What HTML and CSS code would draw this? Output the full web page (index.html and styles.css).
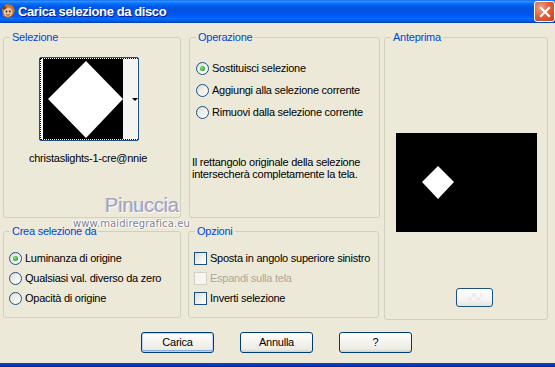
FILE: index.html
```html
<!DOCTYPE html>
<html>
<head>
<meta charset="utf-8">
<link rel="stylesheet" href="styles.css">
</head>
<body>
<div class="window">
  <div class="titlebar">
    <svg class="appicon" width="16" height="18" viewBox="0 0 16 18">
      <path d="M2 6 L6 1 L12 2 L15 7 L13 12 L8 15 L3 13 Z" fill="#c8742c"/>
      <circle cx="8" cy="9" r="4.5" fill="#f2c48e"/>
      <circle cx="6.5" cy="8.5" r="0.9" fill="#2a2a6a"/>
      <circle cx="9.8" cy="8.5" r="0.9" fill="#2a2a6a"/>
      <path d="M6 11.5 Q8 13 10 11.5" stroke="#a03a20" stroke-width="0.9" fill="none"/>
      <path d="M2 5 L5 3 L7 5 L4 7 Z" fill="#7a3e18"/>
      <path d="M11 14 L14 16 L12 17 L9 16 Z" fill="#3a6ad0"/>
    </svg>
    <span class="title">Carica selezione da disco</span>
    <div class="close">
      <svg width="12" height="12" viewBox="0 0 12 12"><path d="M2 2 L10 10 M10 2 L2 10" stroke="#fff" stroke-width="2.2" stroke-linecap="square"/></svg>
    </div>
  </div>
  <div class="content">
    <div class="groups">
      <fieldset class="grp sel">
        <legend>Selezione</legend>
        <div class="sel-inner">
          <div class="thumb">
            <div class="focus">
              <svg class="thumbimg" width="80" height="80" viewBox="0 0 80 80">
                <rect width="80" height="80" fill="#000"/>
                <polygon points="43,2 80,40 43,79 5,40" fill="#fff"/>
              </svg>
              <div class="strip"><span class="arrow"></span></div>
            </div>
          </div>
          <div class="selname">christaslights-1-cre@nnie</div>
        </div>
      </fieldset>
      <fieldset class="grp op">
        <legend>Operazione</legend>
        <div class="rows op-rows">
          <div class="row r22"><span class="radio on"></span><span>Sostituisci selezione</span></div>
          <div class="row r22"><span class="radio"></span><span>Aggiungi alla selezione corrente</span></div>
          <div class="row r22"><span class="radio"></span><span>Rimuovi dalla selezione corrente</span></div>
        </div>
        <p class="desc">Il rettangolo originale della selezione<br>intersecherà completamente la tela.</p>
      </fieldset>
      <fieldset class="grp prev">
        <legend>Anteprima</legend>
        <svg class="preview" width="141" height="99" viewBox="0 0 141 99">
          <rect width="141" height="99" fill="#000"/>
          <polygon points="42,33 58,49 42,66 26,49" fill="#fff"/>
        </svg>
        <div class="pbtn"><span class="checker"></span></div>
      </fieldset>
      <fieldset class="grp crea">
        <legend>Crea selezione da</legend>
        <div class="rows low-rows">
          <div class="row r20"><span class="radio on"></span><span>Luminanza di origine</span></div>
          <div class="row r20"><span class="radio"></span><span>Qualsiasi val. diverso da zero</span></div>
          <div class="row r20"><span class="radio"></span><span>Opacità di origine</span></div>
        </div>
      </fieldset>
      <fieldset class="grp opz">
        <legend>Opzioni</legend>
        <div class="rows low-rows">
          <div class="row r20"><span class="check"></span><span>Sposta in angolo superiore sinistro</span></div>
          <div class="row r20 disabled"><span class="check"></span><span>Espandi sulla tela</span></div>
          <div class="row r20"><span class="check"></span><span>Inverti selezione</span></div>
        </div>
      </fieldset>
    </div>
    <div class="buttons">
      <div class="btn def">Carica</div>
      <div class="btn">Annulla</div>
      <div class="btn">?</div>
    </div>
    <div class="wm1">Pinuccia</div>
    <div class="wm2">www.maidiregrafica.eu</div>
  </div>
  <div class="frame-bottom"></div>
</div>
</body>
</html>
```
FILE: styles.css
```css
html, body {
  margin: 0;
  padding: 0;
  background: #ECE9D8;
}
.window {
  width: 555px;
  height: 367px;
  display: flex;
  flex-direction: column;
  font-family: "Liberation Sans", Arial, sans-serif;
  font-size: 11px;
  letter-spacing: -0.25px;
  color: #000;
  overflow: hidden;
}
.titlebar {
  height: 23px;
  flex: none;
  display: flex;
  align-items: center;
  position: relative;
  background: linear-gradient(to bottom, #0058EE 0%, #3593FF 4%, #288EFF 8%, #127DFF 12%, #036FFC 16%, #0262EE 22%, #0057E5 30%, #0054E3 40%, #0055EB 60%, #005BF5 70%, #026AFE 80%, #0062EF 88%, #0052D6 94%, #0040AB 100%);
}
.appicon {
  margin-left: 0;
  margin-top: 1px;
  flex: none;
}
.title {
  margin-left: 2px;
  margin-top: -1px;
  color: #fff;
  font-family: "Liberation Sans", Arial, sans-serif;
  font-weight: bold;
  font-size: 13px;
  text-shadow: 1px 1px 0 #0A1883;
  letter-spacing: -0.4px;
}
.close {
  position: absolute;
  left: 534px;
  top: 1px;
  width: 19px;
  height: 19px;
  border: 1px solid #fff;
  border-radius: 3px;
  background: radial-gradient(circle at 30% 30%, #F0A08A 0%, #E0623F 45%, #C3401F 100%);
  display: flex;
  align-items: center;
  justify-content: center;
}
.content {
  flex: 1;
  position: relative;
  padding-top: 8px;
  display: flex;
  flex-direction: column;
}
.groups {
  display: grid;
  grid-template-columns: 178px 199px 168px;
  grid-template-rows: 187px 93px;
  column-gap: 0;
  row-gap: 7px;
  margin-left: 3px;
}
.grp {
  margin: 0;
  padding: 0;
  border: 1px solid #D0D0BF;
  border-radius: 3px;
  min-width: 0;
  box-sizing: border-box;
}
.grp legend {
  color: #0046D5;
  padding: 0 2px;
  margin-left: 6px;
  line-height: 13px;
  font-size: 11px;
}
.sel { grid-column: 1; grid-row: 1; }
.op { grid-column: 2; grid-row: 1; margin-left: 8px; }
.prev { grid-column: 3; grid-row: 1 / span 2; margin-left: 4px; margin-bottom: -2px; }
.crea { grid-column: 1; grid-row: 2; }
.opz { grid-column: 2; grid-row: 2; margin-left: 7px; margin-right: 1px; }

.sel-inner {
  display: flex;
  flex-direction: column;
  align-items: center;
  padding-right: 8px;
  padding-top: 13px;
}
.thumb {
  width: 100px;
  height: 84px;
  box-sizing: border-box;
  border: 1px solid #1C4F86;
  border-radius: 2px;
  background: #fff;
  margin-left: 1px;
}
.focus {
  height: 100%;
  box-sizing: border-box;
  border: 1px dotted #000;
  display: flex;
  padding-left: 2px;
}
.thumbimg { display: block; flex: none; }
.strip {
  flex: 1;
  background: #F4F4F2;
  display: flex;
  align-items: center;
  padding-left: 9px;
}
.arrow {
  width: 0;
  height: 0;
  border-left: 3px solid transparent;
  border-right: 3px solid transparent;
  border-top: 3px solid #000;
}
.selname {
  margin-top: 11px;
  line-height: 13px;
}

.rows {
  display: flex;
  flex-direction: column;
}
.row {
  display: flex;
  align-items: center;
  white-space: nowrap;
}
.r22 { height: 22px; }
.r20 { height: 20px; }
.op-rows { padding: 13px 0 0 6px; }
.low-rows { padding: 10px 0 0 5px; }

.radio {
  width: 13px;
  height: 13px;
  box-sizing: border-box;
  border: 1px solid #1C5180;
  border-radius: 50%;
  background: linear-gradient(135deg, #DCDCD7 0%, #F4F4F0 60%, #FFFFFF 100%);
  margin-right: 3px;
  position: relative;
  flex: none;
}
.radio.on::after {
  content: "";
  position: absolute;
  left: 3px;
  top: 3px;
  width: 5px;
  height: 5px;
  border-radius: 50%;
  background: radial-gradient(circle at 40% 40%, #8FE88C 0%, #3DB93A 50%, #1E8F1E 100%);
}
.check {
  width: 13px;
  height: 13px;
  box-sizing: border-box;
  border: 1px solid #1C5180;
  background: linear-gradient(135deg, #DCDCD7 0%, #F4F4F0 60%, #FFFFFF 100%);
  margin-right: 3px;
  flex: none;
}
.disabled { color: #ACA899; }
.disabled .check {
  border-color: #D4D2C6;
  background: #F6F5EE;
}
.desc {
  margin: 33px 0 0 2px;
  line-height: 12px;
}
.preview {
  display: block;
  margin: 89px 0 0 11px;
}
.pbtn {
  width: 37px;
  height: 19px;
  box-sizing: border-box;
  margin: 56px 0 0 71px;
  border: 1px solid #1C5180;
  border-radius: 3px;
  background: linear-gradient(to bottom, #FFFFFF 0%, #F4F3EE 70%, #E4E2D8 100%);
  display: flex;
  align-items: center;
  justify-content: center;
}
.checker {
  width: 14px;
  height: 10px;
  background:
    linear-gradient(45deg, #EDEDED 25%, transparent 25%, transparent 75%, #EDEDED 75%),
    linear-gradient(45deg, #EDEDED 25%, transparent 25%, transparent 75%, #EDEDED 75%);
  background-size: 8px 8px;
  background-position: 0 0, 4px 4px;
}

.buttons {
  display: flex;
  justify-content: center;
  gap: 26px;
  margin-top: 14px;
  padding-right: 2px;
}
.btn {
  width: 73px;
  height: 21px;
  box-sizing: border-box;
  border: 1px solid #003C74;
  border-radius: 3px;
  background: linear-gradient(to bottom, #FFFFFF 0%, #F6F5F0 40%, #ECEBE4 85%, #D6D0C5 100%);
  display: flex;
  align-items: center;
  justify-content: center;
  line-height: 13px;
}
.btn.def {
  box-shadow: inset 0 0 0 1px #BCD4F6, inset 0 -1px 0 1px #89ADE4;
}

.wm1 {
  position: absolute;
  left: 105px;
  top: 171px;
  font-family: "Liberation Sans", Arial, sans-serif;
  font-size: 20px;
  line-height: 23px;
  letter-spacing: -0.2px;
  color: #A5A5BE;
  text-shadow: 1px 1px 0 #FFFFFF, -1px 0 0 #C8C8D6;
}
.wm2 {
  position: absolute;
  left: 73px;
  top: 195px;
  font-family: "DejaVu Sans", sans-serif;
  font-size: 10px;
  letter-spacing: 0.1px;
  color: #7E7E90;
  text-shadow: 1px 0 0 #fff, -1px 0 0 #fff, 0 1px 0 #fff, 0 -1px 0 #fff;
}
.frame-bottom {
  height: 4px;
  flex: none;
  background: linear-gradient(to bottom, #0841C8 0%, #0A3FC0 50%, #001EA0 100%);
}
```
